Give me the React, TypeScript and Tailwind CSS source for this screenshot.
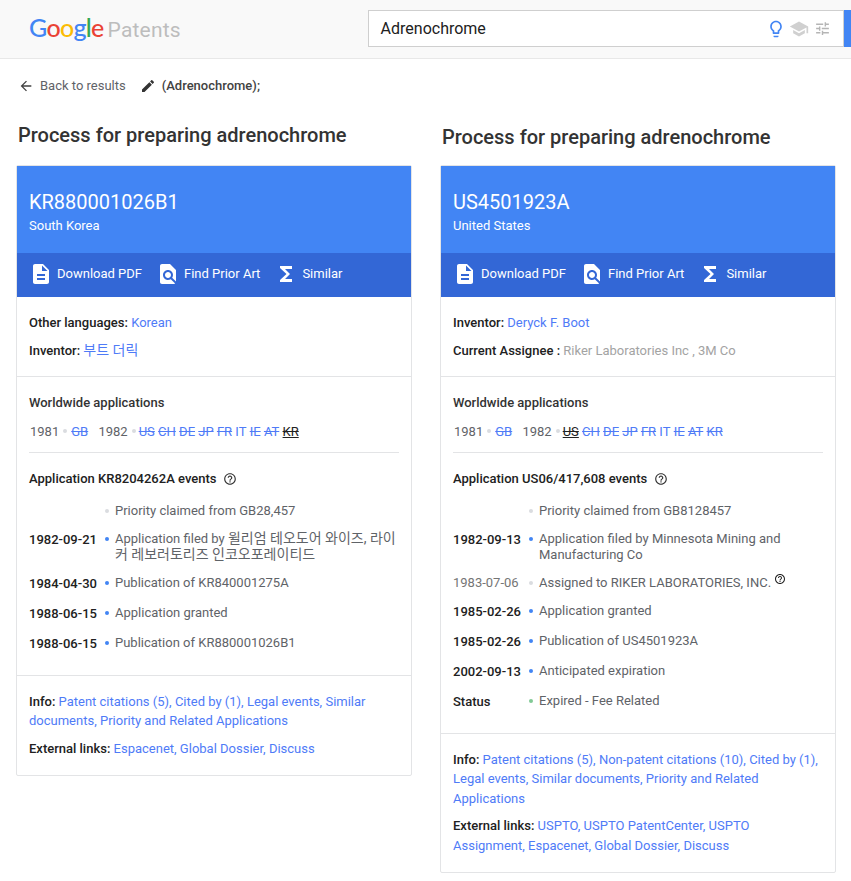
import type { ReactNode } from 'react'

const fontStack = "font-['Roboto','Noto_Sans_CJK_KR',sans-serif]"

function Icon({ d, className }: { d: string; className: string }) {
  return (
    <svg viewBox="0 0 24 24" className={className} fill="currentColor">
      <path d={d} />
    </svg>
  )
}

const icons = {
  back: 'M20 11H7.83l5.59-5.59L12 4l-8 8 8 8 1.41-1.41L7.83 13H20v-2z',
  edit: 'M3 17.25V21h3.75L17.81 9.94l-3.75-3.75L3 17.25zM20.71 7.04c.39-.39.39-1.02 0-1.41l-2.34-2.34c-.39-.39-1.02-.39-1.41 0l-1.83 1.83 3.75 3.75 1.83-1.83z',
  pdf: 'M14 2H6c-1.1 0-1.99.9-1.99 2L4 20c0 1.1.89 2 1.99 2H18c1.1 0 2-.9 2-2V8l-6-6zm2 16H8v-2h8v2zm0-4H8v-2h8v2zm-3-5V3.5L18.5 9H13z',
  find: 'M20 19.59V8l-6-6H6c-1.1 0-1.99.9-1.99 2L4 20c0 1.1.89 2 1.99 2H18c.45 0 .85-.15 1.19-.4l-4.43-4.43c-.8.52-1.74.83-2.76.83-2.76 0-5-2.24-5-5s2.24-5 5-5 5 2.24 5 5c0 1.02-.31 1.96-.83 2.75L20 19.59zM9 13c0 1.66 1.34 3 3 3s3-1.34 3-3-1.34-3-3-3-3 1.34-3 3z',
  sigma: 'M18 4H6v2l6.5 6L6 18v2h12v-3h-7l5-5-5-5h7z',
  help: 'M11 18h2v-2h-2v2zm1-16C6.48 2 2 6.48 2 12s4.48 10 10 10 10-4.48 10-10S17.52 2 12 2zm0 18c-4.41 0-8-3.59-8-8s3.59-8 8-8 8 3.59 8 8-3.59 8-8 8zm0-14c-2.21 0-4 1.79-4 4h2c0-1.1.9-2 2-2s2 .9 2 2c0 2-3 1.75-3 5h2c0-2.25 3-2.5 3-5 0-2.21-1.79-4-4-4z',
  bulb: 'M9 21c0 .55.45 1 1 1h4c.55 0 1-.45 1-1v-1H9v1zm3-19C8.14 2 5 5.14 5 9c0 2.38 1.19 4.47 3 5.74V17c0 .55.45 1 1 1h6c.55 0 1-.45 1-1v-2.26c1.81-1.27 3-3.36 3-5.74 0-3.86-3.14-7-7-7zm2.85 11.1l-.85.6V16h-4v-2.3l-.85-.6C7.8 12.16 7 10.63 7 9c0-2.76 2.24-5 5-5s5 2.24 5 5c0 1.63-.8 3.16-2.15 4.1z',
  school: 'M5 13.18v4L12 21l7-3.82v-4L12 17l-7-3.82zM12 3L1 9l11 6 9-4.91V17h2V9L12 3z',
  tune: 'M3 17v2h6v-2H3zM3 5v2h10V5H3zm10 16v-2h8v-2h-8v-2h-2v6h2zM7 9v2H3v2h4v2h2V9H7zm14 4v-2H11v2h10zm-6-4h2V7h4V5h-4V3h-2v6z',
}

function Links({ items }: { items: string[] }) {
  return (
    <>
      {items.map((item, i) => (
        <span key={item}>
          <a className="text-[#4f7bf7]">{item}</a>
          {i < items.length - 1 ? <span className="text-[#4f7bf7]">, </span> : null}
        </span>
      ))}
    </>
  )
}

function Countries({ list, current }: { list: string[]; current: string }) {
  return (
    <>
      {list.map((c) => (
        <span
          key={c}
          className={
            c === current
              ? 'mr-[3.25px] text-[#212121] decoration-[#212121] [text-decoration-line:underline_line-through]'
              : c === 'IT'
                ? 'mr-[3.25px] text-[#4f7bf7]'
                : 'mr-[3.25px] text-[#4f7bf7] line-through'
          }
        >
          {c}
        </span>
      ))}
    </>
  )
}

type EventRow = {
  date: string
  text: ReactNode
  dot: string
  muted?: boolean
}

function Events({ rows }: { rows: EventRow[] }) {
  return (
    <div className="mt-[14px]">
      {rows.map((row, i) => (
        <div key={i} className="mb-3 flex items-start">
          <div
            className={`w-[72px] shrink-0 whitespace-nowrap ${
              row.muted || !row.date ? 'h-4 leading-[16px] text-[#757575]' : 'h-[18px] leading-[18px] font-medium text-[#212121]'
            }`}
          >
            {row.date}
          </div>
          <div className={`mx-[4px] mt-[6px] h-[4px] w-[4px] shrink-0 rounded-full ${row.dot}`} />
          <div className="ml-[2px] leading-[16px] text-[#5f6368]">{row.text}</div>
        </div>
      ))}
    </div>
  )
}

const grey = 'bg-[#dadce0]'
const blue = 'bg-[#4285f4]'
const green = 'bg-[#81c995]'

type Patent = {
  title: string
  titleClass: string
  id: string
  country: string
  meta: ReactNode
  current: string
  application: string
  events: EventRow[]
  info: string[]
  external: string[]
}

const patents: Patent[] = [
  {
    title: 'Process for preparing adrenochrome',
    titleClass: 'pt-0 pb-4',
    id: 'KR880001026B1',
    country: 'South Korea',
    meta: (
      <>
        <p>
          <span className="font-medium">Other languages: </span>
          <a className="text-[#4f7bf7]">Korean</a>
        </p>
        <p className="mt-2">
          <span className="font-medium">Inventor: </span>
          <a className="text-[14px] leading-none text-[#4f7bf7]">부트 더릭</a>
        </p>
      </>
    ),
    current: 'KR',
    application: 'Application KR8204262A events',
    events: [
      { date: '', text: 'Priority claimed from GB28,457', dot: grey },
      {
        date: '1982-09-21',
        text: (
          <>
            Application filed by{' '}
            <span className="text-[14px] leading-none">윌리엄 테오도어 와이즈, 라이커 레보러토리즈 인코오포레이티드</span>
          </>
        ),
        dot: blue,
      },
      { date: '1984-04-30', text: 'Publication of KR840001275A', dot: blue },
      { date: '1988-06-15', text: 'Application granted', dot: blue },
      { date: '1988-06-15', text: 'Publication of KR880001026B1', dot: blue },
    ],
    info: ['Patent citations (5)', 'Cited by (1)', 'Legal events', 'Similar documents', 'Priority and Related Applications'],
    external: ['Espacenet', 'Global Dossier', 'Discuss'],
  },
  {
    title: 'Process for preparing adrenochrome',
    titleClass: 'pt-[2px] pb-[14px]',
    id: 'US4501923A',
    country: 'United States',
    meta: (
      <>
        <p>
          <span className="font-medium">Inventor: </span>
          <a className="text-[#4f7bf7]">Deryck F. Boot</a>
        </p>
        <p className="mt-2">
          <span className="font-medium">Current Assignee : </span>
          <span className="text-[#a3a3a3]">Riker Laboratories Inc , 3M Co</span>
        </p>
      </>
    ),
    current: 'US',
    application: 'Application US06/417,608 events',
    events: [
      { date: '', text: 'Priority claimed from GB8128457', dot: grey },
      { date: '1982-09-13', text: 'Application filed by Minnesota Mining and Manufacturing Co', dot: blue },
      {
        date: '1983-07-06',
        muted: true,
        dot: grey,
        text: (
          <span>
            Assigned to RIKER LABORATORIES, INC.
            <Icon d={icons.help} className="relative -top-[2px] ml-[3px] inline-block h-3 w-3 align-baseline text-[#212121]" />
          </span>
        ),
      },
      { date: '1985-02-26', text: 'Application granted', dot: blue },
      { date: '1985-02-26', text: 'Publication of US4501923A', dot: blue },
      { date: '2002-09-13', text: 'Anticipated expiration', dot: blue },
      { date: 'Status', text: 'Expired - Fee Related', dot: green },
    ],
    info: [
      'Patent citations (5)',
      'Non-patent citations (10)',
      'Cited by (1)',
      'Legal events',
      'Similar documents',
      'Priority and Related Applications',
    ],
    external: ['USPTO', 'USPTO PatentCenter', 'USPTO Assignment', 'Espacenet', 'Global Dossier', 'Discuss'],
  },
]

function PatentCard({ patent }: { patent: Patent }) {
  return (
    <div className="w-[396px] shrink-0">
      <h2 className={`pl-[2px] text-[20px] leading-[28px] font-medium text-[#333] ${patent.titleClass}`}>
        {patent.title}
      </h2>
      <div className="rounded-[2px] border border-[#e3e4e6] text-[13px] leading-[19.5px]">
        <div className="h-[87px] bg-[#4285f4] pt-[23px] pl-3 text-white">
          <div className="text-[20px] leading-[27px]">{patent.id}</div>
          <div>{patent.country}</div>
        </div>
        <div className="flex h-[44px] items-center bg-[#3367d6] pb-[2px] pl-3 text-white">
          <Icon d={icons.pdf} className="h-6 w-6" />
          <span className="ml-[4px]">Download PDF</span>
          <Icon d={icons.find} className="ml-[14px] h-6 w-6" />
          <span className="ml-[4px]">Find Prior Art</span>
          <Icon d={icons.sigma} className="ml-[14px] h-6 w-6" />
          <span className="ml-[4px]">Similar</span>
        </div>
        <div className="border-b border-[#e3e4e6] px-3 pt-4 pb-4 text-[#212121]">{patent.meta}</div>
        <div className="border-b border-[#e3e4e6] px-3 pt-4 pb-[10px]">
          <div className="font-medium text-[#333]">Worldwide applications</div>
          <div className="mt-[9px] flex items-center border-b border-[#e3e4e6] pb-[11px] pl-[1px] text-[#5f6368]">
            <span>1981</span>
            <span className="mx-[4px] h-[4px] w-[4px] rounded-full bg-[#dadce0]" />
            <span className="mr-[7px]">
              <Countries list={['GB']} current={patent.current} />
            </span>
            <span>1982</span>
            <span className="mr-[3px] ml-[4px] h-[4px] w-[4px] rounded-full bg-[#dadce0]" />
            <span>
              <Countries list={['US', 'CH', 'DE', 'JP', 'FR', 'IT', 'IE', 'AT', 'KR']} current={patent.current} />
            </span>
          </div>
          <div className="mt-4 flex items-center font-medium text-[#212121]">
            {patent.application}
            <Icon d={icons.help} className="ml-[7px] h-[14px] w-[14px] text-[#333]" />
          </div>
          <Events rows={patent.events} />
        </div>
        <div className="px-3 pt-[16.4px] pb-[17px] text-[#212121]">
          <p>
            <span className="font-medium">Info: </span>
            <Links items={patent.info} />
          </p>
          <p className="mt-2">
            <span className="font-medium">External links: </span>
            <Links items={patent.external} />
          </p>
        </div>
      </div>
    </div>
  )
}

export default function App() {
  return (
    <div className={`min-h-[881px] bg-white ${fontStack}`}>
      <header className="flex h-[59px] items-start border-b border-[#e8e8e8] bg-[#f9f9f9]">
        <div className="mt-[10px] ml-[29px] flex w-[339px] items-baseline">
          <span className="font-['Lato',sans-serif] text-[25px] leading-[34px] font-medium tracking-[-0.7px]">
            <span className="text-[#4285f4]">G</span>
            <span className="text-[#ea4335]">o</span>
            <span className="text-[#fbbc05]">o</span>
            <span className="text-[#4285f4]">g</span>
            <span className="text-[#34a853]">l</span>
            <span className="text-[#ea4335]">e</span>
          </span>
          <span className="ml-[4px] text-[21px] leading-[34px] tracking-[0.2px] text-[#bdbdbd]">Patents</span>
        </div>
        <div className="mt-[10px] flex h-[37px] w-[477px] items-center border border-[#cfcfcf] bg-white pl-3 text-[16px] text-[#212121]">
          <span className="flex-1">Adrenochrome</span>
          <Icon d={icons.bulb} className="h-5 w-5 text-[#4285f4]" />
          <Icon d={icons.school} className="ml-[3px] h-5 w-5 text-[#d0d0d0]" />
          <Icon d={icons.tune} className="mr-[12px] ml-[5px] h-[17px] w-[17px] text-[#b5b5b5]" />
        </div>
        <div className="mt-[10px] h-[37px] w-[7px] bg-[#4285f4]" />
      </header>
      <div className="flex h-[53px] items-center pt-[1px] pl-[18px] text-[13px]">
        <Icon d={icons.back} className="h-4 w-4 text-[#424242]" />
        <span className="ml-[6px] text-[#5f6368]">Back to results</span>
        <Icon d={icons.edit} className="ml-[14px] h-4 w-4 text-[#333]" />
        <span className="ml-[6px] font-medium text-[#424242]">(Adrenochrome);</span>
      </div>
      <div className="flex gap-[28px] pt-[9px] pl-4">
        {patents.map((p) => (
          <PatentCard key={p.id} patent={p} />
        ))}
      </div>
    </div>
  )
}
